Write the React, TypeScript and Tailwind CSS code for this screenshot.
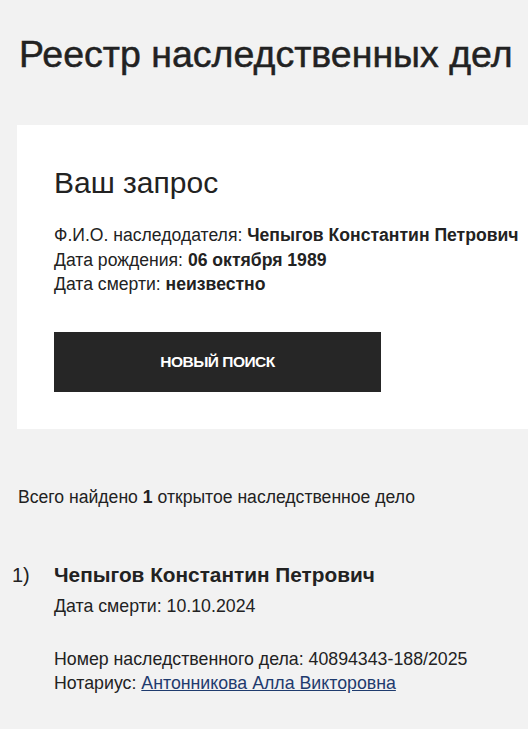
const font = { fontFamily: '"Liberation Sans", Arial, sans-serif' };

export default function App() {
  return (
    <div className="min-h-[729px] bg-[#f2f2f2] text-[#222] overflow-hidden" style={font}>
      <h1 className="pl-[19px] pt-[31px] text-[37.5px] leading-[46px] [-webkit-text-stroke:0.5px_#222] whitespace-nowrap">
        Реестр наследственных дел
      </h1>

      <section className="ml-[17px] mt-[48px] bg-white pl-[37px] pt-[40px] h-[304px]">
        <h2 className="text-[30px] leading-[36px]">Ваш запрос</h2>
        <div className="mt-[22px] text-[17.6px] leading-[24.5px] whitespace-nowrap">
          <p>
            Ф.И.О. наследодателя: <b>Чепыгов Константин Петрович</b>
          </p>
          <p>
            Дата рождения: <b>06 октября 1989</b>
          </p>
          <p>
            Дата смерти: <b>неизвестно</b>
          </p>
        </div>
        <button className="mt-[35px] w-[327px] h-[60px] bg-[#262626] text-white text-[15.5px] font-bold tracking-[-0.5px]">
          НОВЫЙ ПОИСК
        </button>
      </section>

      <p className="pl-[18px] mt-[56px] text-[17.6px] leading-[24px] whitespace-nowrap">
        Всего найдено <b>1</b> открытое наследственное дело
      </p>

      <div className="flex mt-[52px]">
        <div className="w-[54px] pl-[12px] text-[20px] leading-[28px]">1)</div>
        <div className="whitespace-nowrap">
          <h3 className="text-[20.8px] leading-[28px] font-bold">Чепыгов Константин Петрович</h3>
          <p className="mt-[5px] text-[17.75px] leading-[24px]">Дата смерти: 10.10.2024</p>
          <div className="mt-[29px] text-[17.75px] leading-[24px]">
            <p>Номер наследственного дела: 40894343-188/2025</p>
            <p>
              Нотариус:{" "}
              <a href="#" className="text-[#1f3b6e] underline">
                Антонникова Алла Викторовна
              </a>
            </p>
          </div>
        </div>
      </div>
    </div>
  );
}
